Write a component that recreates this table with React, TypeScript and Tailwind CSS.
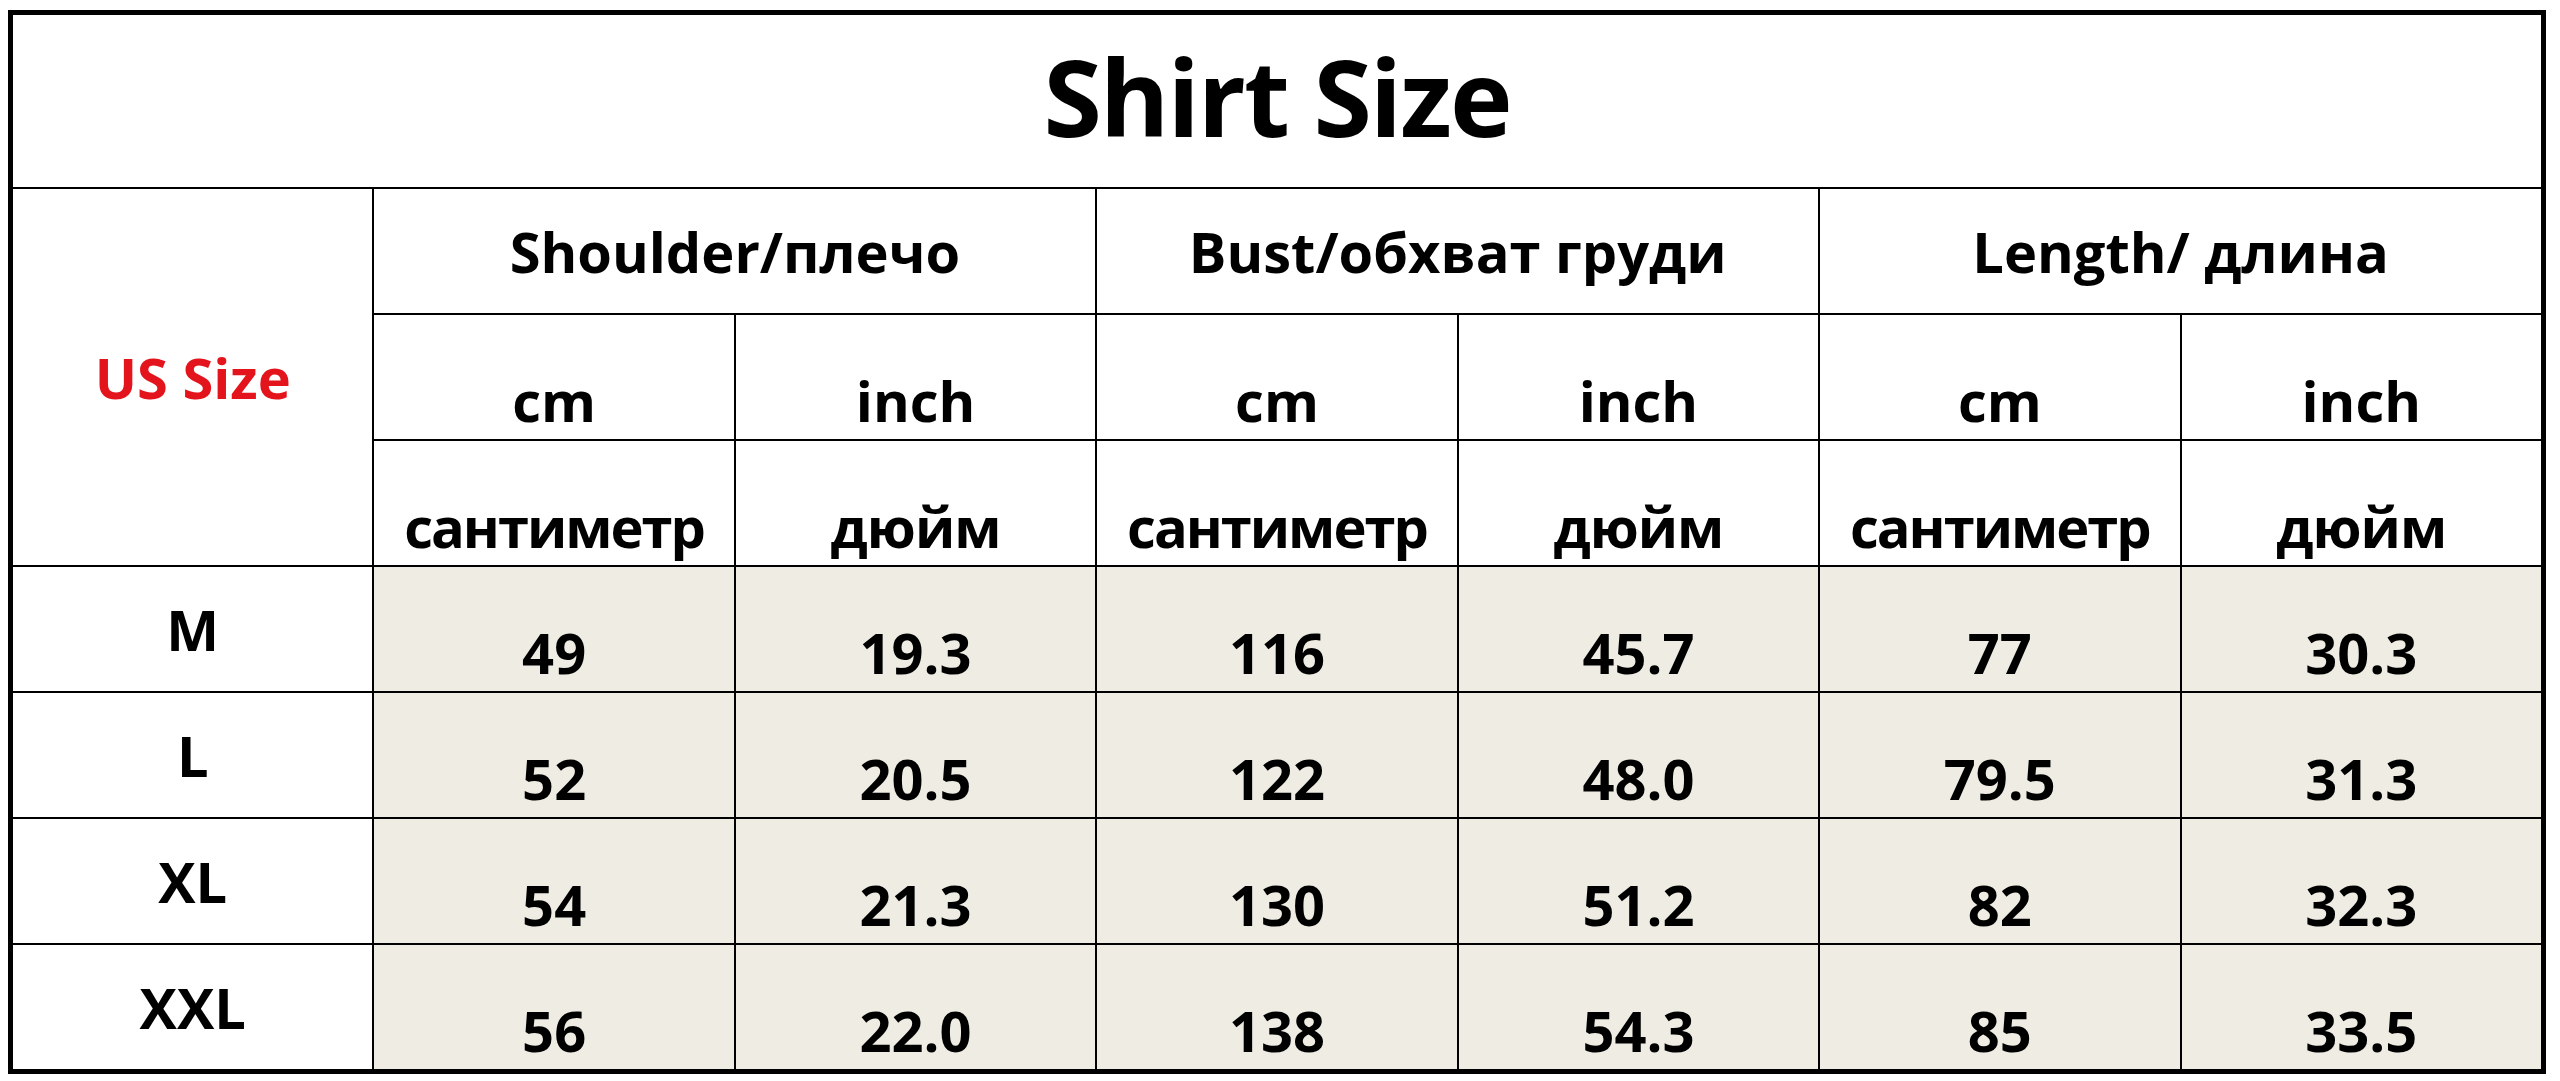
import { Fragment } from 'react'

const font = { fontFamily: '"Open Sans", "Noto Sans", sans-serif' }

const groups = ['Shoulder/плечо', 'Bust/обхват груди', 'Length/ длина']

const rows: { size: string; values: string[] }[] = [
    { size: 'M', values: ['49', '19.3', '116', '45.7', '77', '30.3'] },
    { size: 'L', values: ['52', '20.5', '122', '48.0', '79.5', '31.3'] },
    { size: 'XL', values: ['54', '21.3', '130', '51.2', '82', '32.3'] },
    { size: 'XXL', values: ['56', '22.0', '138', '54.3', '85', '33.5'] },
]

const cellText = 'text-[56px] leading-none font-bold'

const App = () => (
    <div className="min-h-[1081px] w-[2560px] bg-white pl-[8px] pt-[10px] text-black" style={font}>
        <div className="grid w-[2538px] grid-cols-7 grid-rows-[172px_repeat(7,124px)] gap-[2px] border-[5px] border-black bg-black">
            <div className="col-span-7 flex items-center justify-center bg-white pb-[10px]">
                <span className="text-[106px] leading-none font-bold tracking-[-2px]">Shirt Size</span>
            </div>

            <div className="row-span-3 flex items-center justify-center bg-white">
                <span className={`${cellText} text-[#e3141b]`}>US Size</span>
            </div>
            {groups.map((group) => (
                <div key={group} className="col-span-2 flex items-center justify-center bg-white">
                    <span className={cellText}>{group}</span>
                </div>
            ))}

            {groups.map((group) => (
                <Fragment key={`${group}-units`}>
                    <div className="flex items-end justify-center bg-white pb-[11px]">
                        <span className={cellText}>cm</span>
                    </div>
                    <div className="flex items-end justify-center bg-white pb-[11px]">
                        <span className={cellText}>inch</span>
                    </div>
                </Fragment>
            ))}

            {groups.map((group) => (
                <Fragment key={`${group}-units-ru`}>
                    <div className="flex items-end justify-center bg-white pb-[11px]">
                        <span className={`${cellText} tracking-[-2px]`}>сантиметр</span>
                    </div>
                    <div className="flex items-end justify-center bg-white pb-[11px]">
                        <span className={`${cellText} tracking-[-1px]`}>дюйм</span>
                    </div>
                </Fragment>
            ))}

            {rows.map((row) => (
                <Fragment key={row.size}>
                    <div className="flex items-center justify-center bg-white">
                        <span className={cellText}>{row.size}</span>
                    </div>
                    {row.values.map((value, i) => (
                        <div key={i} className="flex items-end justify-center bg-[#eeece3] pb-[11px]">
                            <span className={cellText}>{value}</span>
                        </div>
                    ))}
                </Fragment>
            ))}
        </div>
    </div>
)

export default App
